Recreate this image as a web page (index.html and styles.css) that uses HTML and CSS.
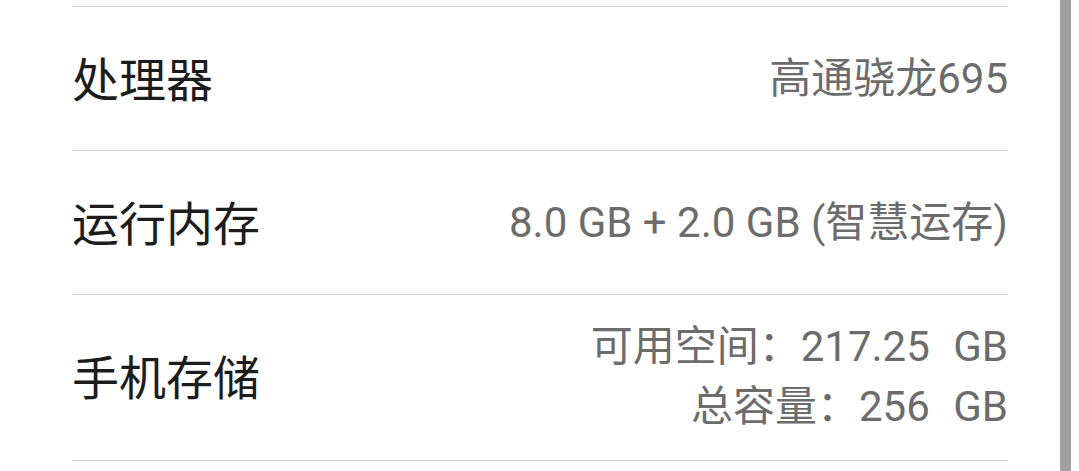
FILE: index.html
```html
<!DOCTYPE html>
<html lang="zh-CN">
<head>
	<meta charset="UTF-8">
	<title>关于手机</title>
	<link rel="stylesheet" href="styles.css">
</head>
<body>
	<div class="list">
		<div class="row">
			<span class="label">处理器</span>
			<span class="value">高通骁龙695</span>
		</div>
		<div class="row">
			<span class="label">运行内存</span>
			<span class="value">8.0 GB + 2.0 GB (智慧运存)</span>
		</div>
		<div class="row row-tall">
			<span class="label">手机存储</span>
			<span class="value">
				<span class="line">可用空间：<span class="num">217.25 GB</span></span>
				<span class="line">总容量：<span class="num">256 GB</span></span>
			</span>
		</div>
	</div>
	<div class="scrollbar"></div>
</body>
</html>
```

FILE: styles.css
```css
*{margin:0; padding:0; box-sizing:content-box;}
html,body{height:100%; background:#fff; overflow:hidden;}
body{font-family:Roboto, "Noto Sans CJK SC", sans-serif;}

.list{margin:6px 71px 0 72px; border-top:1px solid #d2d2d2;}
.row{display:flex; justify-content:space-between; align-items:center; min-height:143px; border-bottom:1px solid #d2d2d2;}
.row-tall{min-height:0; padding:22px 0 23px;}

.label{font-family:"Noto Sans CJK SC", sans-serif; font-size:47px; color:#1c1c1c; line-height:60px; margin-top:-4px;}
.value{font-size:42px; color:#6c6c6c; line-height:60px; text-align:right;}
.line{display:block;}
.num{word-spacing:13px;}

.scrollbar{position:absolute; top:0; right:8px; width:11px; height:100%; background:#a1a1a1;}
```
